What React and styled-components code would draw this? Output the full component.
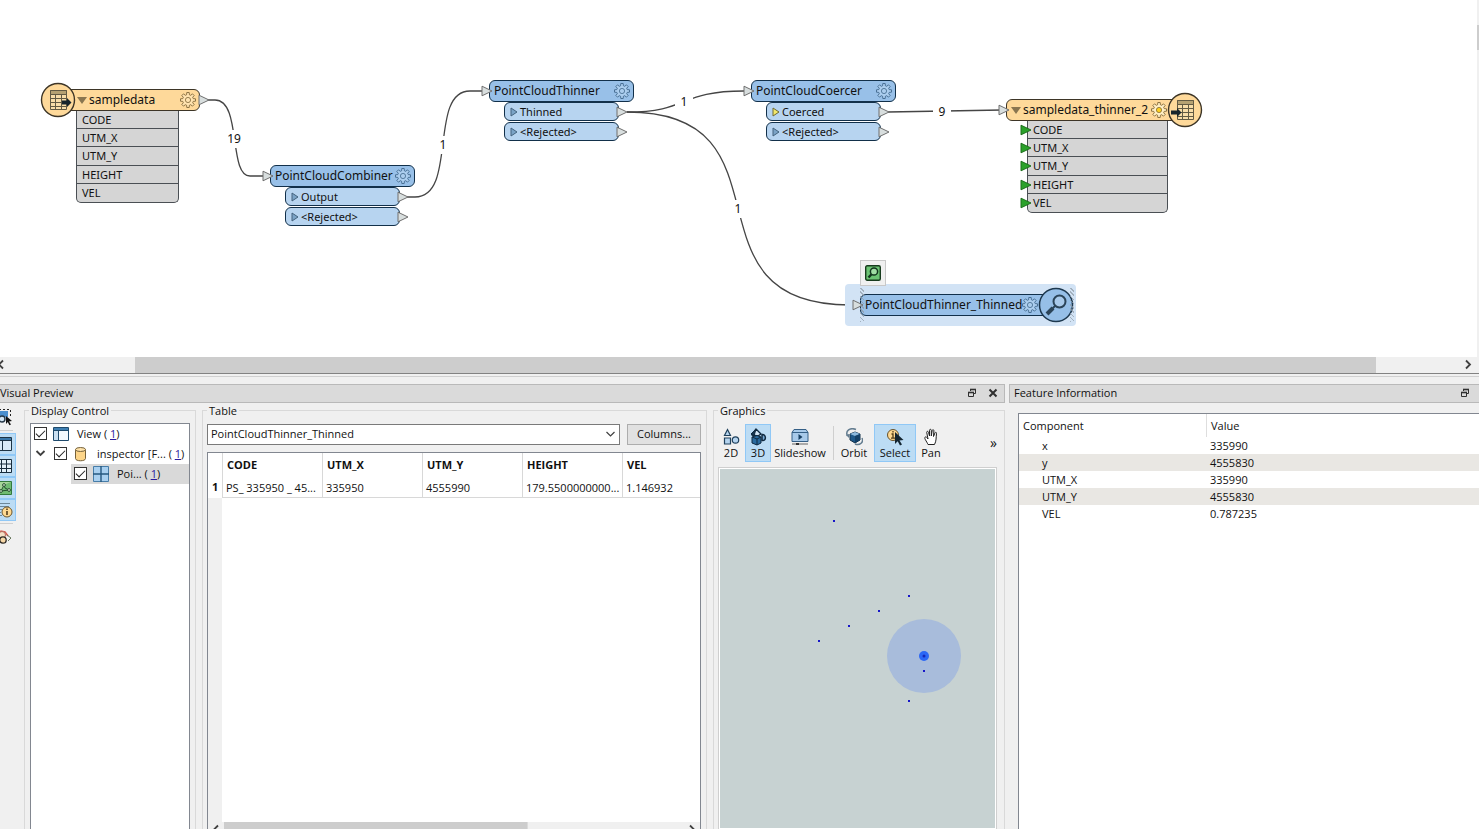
import React, { useState } from "react";
import styled, { createGlobalStyle } from "styled-components";

const edges = [
  "M207 100 H215 C242 100 228 176 250 176 H264",
  "M407 197 H415 C458 197 428 91 470 91 H484",
  "M627 112 C690 112 678 91 744 91",
  "M627 112 C800 112 676 305 850 305 H854",
  "M888 112 L1002 110",
];

const edgeLabels = [
  { x: 234, y: 139, text: "19" },
  { x: 443, y: 145, text: "1" },
  { x: 684, y: 102, text: "1" },
  { x: 942, y: 112, text: "9" },
  { x: 738, y: 209, text: "1" },
];

const transformers = [
  { x: 270, y: 165, name: "PointCloudCombiner", port: "Output" },
  { x: 489, y: 80, name: "PointCloudThinner", port: "Thinned" },
  { x: 751, y: 80, name: "PointCloudCoercer", port: "Coerced", hot: true },
];

const attributes = ["CODE", "UTM_X", "UTM_Y", "HEIGHT", "VEL"];

const features = [
  ["x", "335990"],
  ["y", "4555830"],
  ["UTM_X", "335990"],
  ["UTM_Y", "4555830"],
  ["VEL", "0.787235"],
];

const points = [
  [115, 53],
  [190, 128],
  [160, 143],
  [130, 158],
  [100, 173],
  [205, 203],
  [190, 233],
];

// eight teeth, four corners each, around (9, 9)
const gearPoints = Array.from({ length: 8 }, (_, i) =>
  [
    [-15, 5.4],
    [-9, 7.6],
    [9, 7.6],
    [15, 5.4],
  ].map(([offset, r]) => {
    const a = ((i * 45 + offset) * Math.PI) / 180;
    return `${(9 + r * Math.cos(a)).toFixed(2)},${(9 + r * Math.sin(a)).toFixed(2)}`;
  })
)
  .flat()
  .join(" ");

function Port({ color = "#d8dede", line = "#6f6f6f" }) {
  return (
    <svg width="12" height="12" viewBox="0 0 12 12">
      <path d="M1 1.2 L11 6 L1 10.8 Z" fill={color} stroke={line} />
    </svg>
  );
}

function Expander({ hot }) {
  return (
    <svg width="8" height="10" viewBox="0 0 8 10">
      <path
        d="M1 1 L7 5 L1 9 Z"
        fill={hot ? "#f2e86a" : "#7ba3c6"}
        stroke={hot ? "#6e6a34" : "#44637e"}
      />
    </svg>
  );
}

function Gear({ stroke = "#41688c", fill = "#abcdee", core = "none" }) {
  return (
    <svg width="16" height="16" viewBox="1 1 16 16" stroke={stroke}>
      <polygon points={gearPoints} fill={fill} strokeLinejoin="round" strokeWidth=".9" />
      <circle cx="9" cy="9" r="2.6" fill={core} strokeWidth=".8" />
    </svg>
  );
}

function Sheet({ writer }) {
  return (
    <svg width="36" height="36" viewBox="0 0 36 36">
      <circle cx="18" cy="18" r="16.5" fill="#fed99a" stroke="#3d3527" strokeWidth="1.4" />
      <g stroke="#625a43" fill="#f8dda8">
        <path d="M10.5 8.5h16v19h-16z" />
        <path d="M10.5 8.5h16v4h-16z" fill="#b5a172" />
        <path d="M10.5 16.5h16M10.5 20.5h16M10.5 24.5h16M15.5 12.5v15M21.5 12.5v15" />
      </g>
      <path
        d={
          writer
            ? "M4 18.5h6v-2.5l4.5 4.5-4.5 4.5v-2.5H4z"
            : "M22 18.5h5v-2.5l4.5 4.5-4.5 4.5v-2.5h-5z"
        }
        fill="#17252c"
      />
    </svg>
  );
}

function Glass() {
  return (
    <svg width="36" height="36" viewBox="0 0 36 36">
      <circle cx="18" cy="18" r="16.5" fill="#96bfe8" stroke="#1d384f" strokeWidth="1.5" />
      <circle cx="21.5" cy="14.5" r="6" fill="#a9caeb" stroke="#2b4459" strokeWidth="2" />
      <path d="M17 19 L14.5 21.5" stroke="#2b4459" strokeWidth="2" />
      <path d="M15 21 L9 27" stroke="#2b4459" strokeWidth="4" />
    </svg>
  );
}

function Chevron({ dir = "down", color = "#404040", bold }) {
  const d = {
    down: "M1.5 3 L5.5 7 L9.5 3",
    left: "M7 1.5 L3 5.5 L7 9.5",
    right: "M4 1.5 L8 5.5 L4 9.5",
  }[dir];
  return (
    <svg width="11" height="11" viewBox="0 0 11 11">
      <path d={d} fill="none" stroke={color} strokeWidth={bold ? 1.8 : 1.2} />
    </svg>
  );
}

function FloatIcon() {
  return (
    <svg width="10" height="10" viewBox="0 0 10 10" fill="none" stroke="#303030">
      <path d="M3.5 3V1.5h5v4H7" />
      <path d="M3 1.5h6" strokeWidth="1.6" />
      <path d="M1.5 4.5h5v4h-5z" />
      <path d="M1 4.5h6" strokeWidth="1.6" />
    </svg>
  );
}

function WindowIcon() {
  return (
    <svg width="16" height="16" viewBox="0 0 16 16">
      <path d="M.5 1.5h15v13H.5z" fill="#f4f9fd" stroke="#1f4a6c" />
      <path d="M1 2h14v2.5H1z" fill="#3f7fb2" />
      <path d="M.5 4.5h15M5.5 4.5v10" stroke="#1f4a6c" />
      <path d="M1 5h4v9H1z" fill="#cbe0f1" />
    </svg>
  );
}

function StripIcon({ kind }) {
  return (
    <svg width="18" height="18" viewBox="0 0 18 18">
      {kind === "pick" && (
        <>
          <path d="M0 3h13v6H0z" fill="#4b8fce" />
          <path d="M0 1.5h15.5V10" fill="none" stroke="#222" strokeDasharray="2 2" />
          <circle cx="7" cy="11" r="3" fill="#d2e6f5" stroke="#263746" strokeWidth="1.4" />
          <path d="M11 8l6 5-3 .4 2 3-1.6.8-1.6-3.2L11 16z" fill="#111" />
        </>
      )}
      {kind === "window" && (
        <>
          <path d="M1.5 2.5h15v13h-15z" fill="#d9eaf7" stroke="#1d3344" />
          <path d="M2 3h14v2.5H2z" fill="#3976a8" />
          <path d="M2 5.5h14M7.5 5.5v10" stroke="#1d3344" />
        </>
      )}
      {kind === "grid" && (
        <path
          d="M1.5 2.5h15v13h-15zM1.5 7h15M1.5 11.5h15M6.5 2.5v13M11.5 2.5v13"
          fill="#e4f0f9"
          stroke="#182c3c"
        />
      )}
      {kind === "map" && (
        <>
          <path d="M1.5 2.5h15v13h-15z" fill="#a6d69a" stroke="#337a3d" />
          <path d="M2 13l5-3 4-5 5-2v12H2z" fill="#6fbb72" />
          <path d="M6 12l3-6M6 12l8-1M9 6l1 3 4 2" fill="none" stroke="#234d2d" />
          <circle cx="9" cy="6" r="1.4" fill="#e9f7e4" stroke="#234d2d" />
          <circle cx="14" cy="11" r="1.4" fill="#e9f7e4" stroke="#234d2d" />
          <circle cx="6" cy="12" r="1.4" fill="#e9f7e4" stroke="#234d2d" />
        </>
      )}
      {kind === "info" && (
        <>
          <path d="M0 2.5h15M0 5.5h14M0 8.5h7M0 11.5h6M0 14.5h7" stroke="#6d8798" />
          <circle cx="12" cy="11" r="5" fill="#ffd991" stroke="#6d5529" />
          <path d="M12 10v4M12 7.5v1.4" stroke="#4a3514" strokeWidth="1.5" />
        </>
      )}
      {kind === "bug" && (
        <>
          <path d="M3 6l3-3 4 1 3 4" fill="none" stroke="#d85b50" strokeWidth="1.5" />
          <circle cx="7" cy="7" r="3.5" fill="#f4dfc5" stroke="#b0685a" />
          <circle cx="8" cy="12" r="3.2" fill="#f7d8a7" stroke="#2e2a26" strokeWidth="1.3" />
          <path d="M12 7l4 3-3 3" fill="none" stroke="#66765c" />
        </>
      )}
    </svg>
  );
}

function ToolIcon({ kind }) {
  return (
    <svg width="18" height="18" viewBox="0 0 18 18">
      {kind === "2D" && (
        <g fill="#b5d4ef" stroke="#20415c" strokeWidth="1.2">
          <path d="M5.5 1.5L8.5 7.5h-6z" />
          <path d="M2.5 10h6v6h-6z" />
          <circle cx="13.5" cy="12" r="3.2" />
        </g>
      )}
      {kind === "3D" && (
        <g stroke="#102a40" strokeLinejoin="round">
          <path d="M7 1l5 5-3 2-6-1z" fill="#d2e6f5" strokeWidth="1.4" />
          <path d="M7 1L2 6l3 2z" fill="#17364f" />
          <path d="M3 9l5-1.5 4 1.5v6l-4 2-5-2z" fill="#2b6b9e" />
          <path d="M3 9l5 2 4-2M8 11v6" fill="none" />
          <path d="M13 6.5c4-1 5 7 0 6z" fill="#78aad5" strokeWidth="1.5" />
        </g>
      )}
      {kind === "Slideshow" && (
        <g stroke="#355f86">
          <path d="M3 1.5h12l2 3v9H1v-9z" fill="#a8caea" />
          <path d="M1 4.5h16" />
          <path d="M7.5 6l4 3-4 3z" fill="#163e62" stroke="none" />
          <path d="M1 16h16" stroke="#aaa" strokeWidth="2" />
          <path d="M5 16h3" stroke="#333" strokeWidth="2" />
        </g>
      )}
      {kind === "Orbit" && (
        <g>
          <path d="M5 6l5-2 5 2v6l-5 3-5-3z" fill="#1e5788" stroke="#14324b" />
          <path d="M5 6l5-2 5 2-5 2z" fill="#8cb8dd" />
          <path d="M10 8v7l5-3V6z" fill="#133f66" />
          <path d="M11 1.5C5-1 0 3 2.5 8M17 10c2 4-2 8-7 6" fill="none" stroke="#647d90" strokeWidth="1.5" />
          <path d="M1 7l3 3 0-4z" fill="#647d90" />
        </g>
      )}
      {kind === "Select" && (
        <g>
          <circle cx="7" cy="7" r="5.5" fill="#ffd991" stroke="#68512a" />
          <path d="M5.5 6H7v4M5 10.2h4M7 3v1.5" fill="none" stroke="#533d18" strokeWidth="1.3" />
          <path d="M9 4l8.5 8-4 .5 2.5 4-2 1-2.3-4.2L9 16z" fill="#132531" />
        </g>
      )}
      {kind === "Pan" && (
        <path
          d="M6 16.5C4.5 13 2 10.5 3 9.2c.8-.9 2 .2 3 1.8L4.7 4.3c0-1.3 1.5-1.3 1.8 0L7.5 8V2.3c0-1.3 1.8-1.3 1.8 0V8l.9-5.5c.2-1.2 1.7-1 1.7.2L11.5 8.5l1.5-3.7c.5-1 1.7-.5 1.5.6-.5 3.8 0 7.6-2 11.1z"
          fill="#fff"
          stroke="#222"
        />
      )}
    </svg>
  );
}

function Transformer({ x, y, name, port, hot }) {
  return (
    <Node $x={x} $y={y}>
      <Header $w={145} $blue>
        <NodeName>{name}</NodeName>
        <IconButton aria-label={`${name} properties`}>
          <Gear />
        </IconButton>
      </Header>
      <InPort $top={5}>
        <Port />
      </InPort>
      <Ports>
        {[port, "<Rejected>"].map((p, i) => (
          <PortRow key={p}>
            <Expander hot={hot && i === 0} />
            {p}
            <OutPort $top={3}>
              <Port />
            </OutPort>
          </PortRow>
        ))}
      </Ports>
    </Node>
  );
}

function Workspace() {
  return (
    <Canvas>
      <Links width="1479" height="357">
        {edges.map((d) => (
          <path key={d} d={d} fill="none" stroke="#454545" strokeWidth="1.3" />
        ))}
      </Links>
      {edgeLabels.map((l) => (
        <EdgeLabel key={`${l.x}-${l.y}`} $x={l.x} $y={l.y}>
          {l.text}
        </EdgeLabel>
      ))}

      <Node $x={58} $y={89}>
        <Header $w={142} $pad={18}>
          <Triangle />
          <NodeName>sampledata</NodeName>
          <IconButton aria-label="sampledata properties">
            <Gear stroke="#80683a" fill="#ffe3b0" />
          </IconButton>
        </Header>
        <OutPort $top={5}>
          <Port />
        </OutPort>
        <Badge $x={-18}>
          <Sheet />
        </Badge>
        <Attributes $w={103} $left={18}>
          {attributes.map((a) => (
            <li key={a}>{a}</li>
          ))}
        </Attributes>
      </Node>

      {transformers.map((t) => (
        <Transformer key={t.name} {...t} />
      ))}

      <Node $x={1006} $y={99}>
        <Header $w={180} $pad={4} $end={18}>
          <Triangle />
          <NodeName>sampledata_thinner_2</NodeName>
          <IconButton aria-label="sampledata_thinner_2 properties">
            <Gear stroke="#80683a" fill="#ffefc4" core="#ffd21e" />
          </IconButton>
        </Header>
        <InPort $top={5}>
          <Port />
        </InPort>
        <Badge $x={161}>
          <Sheet writer />
        </Badge>
        <Attributes $w={141} $left={21}>
          {attributes.map((a) => (
            <li key={a}>
              <InPort $top={3}>
                <Port color="#2ba12b" line="#1d701d" />
              </InPort>
              {a}
            </li>
          ))}
        </Attributes>
      </Node>

      <Selection />
      <Node $x={860} $y={294}>
        <Header $w={196} $blue $end={18}>
          <NodeName>PointCloudThinner_Thinned</NodeName>
          <IconButton aria-label="PointCloudThinner_Thinned properties">
            <Gear />
          </IconButton>
        </Header>
        <InPort $top={5}>
          <Port />
        </InPort>
        <Hatch $x={0} />
        <Badge $x={178}>
          <Glass />
        </Badge>
        <Hatch $x={210} />
        <Popup aria-label="Inspect">
          <svg width="16" height="16" viewBox="0 0 16 16">
            <rect x=".7" y=".7" width="14.6" height="14.6" rx="1.5" fill="#6cc474" stroke="#173b1d" strokeWidth="1.4" />
            <circle cx="9" cy="6.5" r="3.6" fill="#a0dda4" stroke="#12351d" strokeWidth="1.5" />
            <path d="M6.5 9.2L3.5 12.5" stroke="#12351d" strokeWidth="2.4" />
          </svg>
        </Popup>
      </Node>
      <EdgeBar />
    </Canvas>
  );
}

function TreeItem({ indent, icon, label, open, selected }) {
  const [checked, setChecked] = useState(true);

  return (
    <TreeRow $indent={indent}>
      {open && <Chevron bold />}
      <TreeLabel $selected={selected}>
        <Check type="checkbox" checked={checked} onChange={() => setChecked(!checked)} />
        {icon}
        <span>
          {label} ( <a href="#count">1</a>)
        </span>
      </TreeLabel>
    </TreeRow>
  );
}

function DisplayControl() {
  return (
    <Group $w={172}>
      <legend>Display Control</legend>
      <Tree>
        <TreeItem indent={3} icon={<WindowIcon />} label="View" />
        <TreeItem
          indent={4}
          open
          label="inspector [F..."
          icon={
            <svg width="16" height="16" viewBox="0 0 16 16" fill="#fdd589" stroke="#75613a">
              <path d="M2.5 3.5v9c0 3 10 3 10 0v-9" />
              <ellipse cx="7.5" cy="3.5" rx="5" ry="2" fill="#fee2aa" />
            </svg>
          }
        />
        <TreeItem
          indent={40}
          selected
          label="Poi..."
          icon={
            <svg width="16" height="16" viewBox="0 0 16 16">
              <path d="M.5 .5h15v15H.5z" fill="#a9d0f0" stroke="#477da8" />
              <path d="M8 0v16M0 8h16" stroke="#26587f" strokeWidth="1.4" />
            </svg>
          }
        />
      </Tree>
    </Group>
  );
}

function TablePanel() {
  return (
    <Group $grow>
      <legend>Table</legend>
      <TableTools>
        <Picker>
          <select aria-label="Feature type">
            <option>PointCloudThinner_Thinned</option>
          </select>
          <Chevron />
        </Picker>
        <ColumnsButton>Columns...</ColumnsButton>
      </TableTools>
      <TableBox>
        <TableArea>
          <DataTable>
            <thead>
              <tr>
                <th />
                {attributes.map((a) => (
                  <th key={a}>{a}</th>
                ))}
              </tr>
            </thead>
            <tbody>
              <tr>
                <th>1</th>
                <td>PS_ 335950 _ 45...</td>
                <td>335950</td>
                <td>4555990</td>
                <td>179.5500000000...</td>
                <td>1.146932</td>
              </tr>
            </tbody>
          </DataTable>
        </TableArea>
        <TableScroll>
          <Chevron dir="left" bold />
          <ScrollThumb $start={0} $size={66} />
          <Chevron dir="right" bold />
        </TableScroll>
      </TableBox>
    </Group>
  );
}

function Graphics() {
  const [mode, setMode] = useState("3D");
  const [tool, setTool] = useState("Select");

  return (
    <Group $w={292}>
      <legend>Graphics</legend>
      <Toolbar>
        {["2D", "3D"].map((m) => (
          <ToolButton key={m} $w={26} $on={mode === m} onClick={() => setMode(m)}>
            <ToolIcon kind={m} />
            {m}
          </ToolButton>
        ))}
        <ToolButton $w={56}>
          <ToolIcon kind="Slideshow" />
          Slideshow
        </ToolButton>
        <Divider />
        {["Orbit", "Select", "Pan"].map((t) => (
          <ToolButton
            key={t}
            $w={{ Orbit: 38, Select: 42, Pan: 28 }[t]}
            $on={tool === t}
            onClick={() => setTool(t)}
          >
            <ToolIcon kind={t} />
            {t}
          </ToolButton>
        ))}
        <MoreButton aria-label="More tools">»</MoreButton>
      </Toolbar>
      <Viewport>
        <svg width="276" height="361">
          <circle cx="205" cy="188" r="37" fill="#a8bcdb" />
          <circle cx="205" cy="188" r="5" fill="#2b67f5" />
          <circle cx="205" cy="188" r="1.5" fill="#1428b8" />
          {points.map(([x, y]) => (
            <rect key={`${x}-${y}`} x={x - 1} y={y - 1} width="2" height="2" fill="#1717c8" />
          ))}
        </svg>
      </Viewport>
    </Group>
  );
}

function App() {
  return (
    <Page>
      <GlobalStyle />
      <Workspace />
      <CanvasScroll>
        <Chevron dir="left" bold />
        <ScrollThumb $start={8} $size={87} />
        <Chevron dir="right" bold />
      </CanvasScroll>
      <Docks>
        <Dock $grow={1005}>
          <TitleBar $clip>
            <h2>Visual Preview</h2>
            <IconButton aria-label="Float">
              <FloatIcon />
            </IconButton>
            <IconButton aria-label="Close">
              <svg width="10" height="10" viewBox="0 0 10 10">
                <path d="M1.5 1.5l7 7M8.5 1.5l-7 7" stroke="#303030" strokeWidth="2" />
              </svg>
            </IconButton>
          </TitleBar>
          <PreviewBody>
            <Strip>
              <StripButton aria-label="Select region">
                <StripIcon kind="pick" />
              </StripButton>
              <StripRule />
              {["window", "grid", "map", "info"].map((k) => (
                <StripButton key={k} $on aria-label={`Toggle ${k}`}>
                  <StripIcon kind={k} />
                </StripButton>
              ))}
              <StripRule />
              <StripButton aria-label="Inspect settings">
                <StripIcon kind="bug" />
              </StripButton>
            </Strip>
            <DisplayControl />
            <TablePanel />
            <Graphics />
          </PreviewBody>
        </Dock>
        <Dock $grow={470}>
          <TitleBar>
            <h2>Feature Information</h2>
            <IconButton aria-label="Float">
              <FloatIcon />
            </IconButton>
          </TitleBar>
          <InfoBox>
            <InfoTable>
              <thead>
                <tr>
                  <th>Component</th>
                  <th>Value</th>
                </tr>
              </thead>
              <tbody>
                {features.map(([name, value]) => (
                  <tr key={name}>
                    <td>{name}</td>
                    <td>{value}</td>
                  </tr>
                ))}
              </tbody>
            </InfoTable>
          </InfoBox>
        </Dock>
      </Docks>
    </Page>
  );
}

export default App;

const GlobalStyle = createGlobalStyle`
  * {
    box-sizing: border-box;
  }

  body {
    margin: 0;
    background: #f0f0f0;
    color: #111;
    font-family: "Open Sans", "Noto Sans", sans-serif;
    font-size: 11px;
    line-height: 16px;
  }

  button,
  select {
    font: inherit;
    color: inherit;
  }

  svg {
    display: block;
    flex: none;
  }
`;

const Page = styled.main`
  display: flex;
  flex-direction: column;
  height: 100vh;
  overflow: hidden;
`;

const Canvas = styled.section`
  position: relative;
  flex: 357 0 0;
  overflow: hidden;
  background: #fff;
  font-family: "Noto Sans", "Open Sans", sans-serif;
`;

const Links = styled.svg`
  position: absolute;
  top: 0;
  left: 0;
`;

const EdgeLabel = styled.span`
  position: absolute;
  left: ${(p) => p.$x}px;
  top: ${(p) => p.$y}px;
  min-width: 18px;
  padding: 0 2px;
  transform: translate(-50%, -50%);
  background: #fff;
  font-size: 12px;
  line-height: 18px;
  text-align: center;
`;

const Node = styled.div`
  position: absolute;
  left: ${(p) => p.$x}px;
  top: ${(p) => p.$y}px;
`;

const Header = styled.div`
  display: flex;
  align-items: center;
  width: ${(p) => p.$w}px;
  height: 22px;
  padding: 0 ${(p) => p.$end || 3}px 0 ${(p) => p.$pad || 4}px;
  border: 1px solid ${(p) => (p.$blue ? "#12304a" : "#3d3527")};
  border-radius: 6px;
  background: ${(p) => (p.$blue ? "#98c0e8" : "#fed99a")};
`;

const NodeName = styled.span`
  flex: 1;
  font-size: 12px;
  white-space: nowrap;
`;

const Triangle = styled.span`
  margin-right: 2px;
  border: 5px solid transparent;
  border-top: 7px solid #8a7650;
  border-bottom: 0;
`;

const IconButton = styled.button`
  display: flex;
  padding: 0;
  border: 0;
  background: none;
`;

const InPort = styled.span`
  position: absolute;
  left: -8px;
  top: ${(p) => p.$top}px;
`;

const OutPort = styled.span`
  position: absolute;
  right: -10px;
  top: ${(p) => p.$top}px;
`;

const Badge = styled.span`
  position: absolute;
  left: ${(p) => p.$x}px;
  top: -7px;
`;

const Ports = styled.div`
  display: grid;
  gap: 1px;
  width: 115px;
  margin-left: 15px;
`;

const PortRow = styled.div`
  position: relative;
  display: flex;
  align-items: center;
  gap: 2px;
  height: 19px;
  padding-left: 5px;
  border: 1px solid #12304a;
  border-radius: 6px;
  background: #b7d4f0;
`;

const Attributes = styled.ul`
  display: grid;
  grid-auto-rows: 1fr;
  width: ${(p) => p.$w}px;
  height: 92px;
  margin: 0 0 0 ${(p) => p.$left}px;
  padding: 0;
  border: 1px solid #4a4f54;
  border-top: 0;
  border-radius: 0 0 5px 5px;
  background: #d5d5d5;
  line-height: 17px;
  list-style: none;

  li {
    position: relative;
    padding-left: 5px;
    border-bottom: 1px solid #4a4f54;
  }

  li:last-child {
    border-bottom: 0;
  }
`;

const Selection = styled.div`
  position: absolute;
  left: 845px;
  top: 284px;
  width: 231px;
  height: 42px;
  border-radius: 4px;
  background: #d2e3f5;
`;

const Hatch = styled.span`
  position: absolute;
  left: ${(p) => p.$x}px;
  top: -6px;
  width: 4px;
  height: 34px;
  background: repeating-linear-gradient(45deg, #8f9ba6 0 1px, transparent 1px 3px);
  opacity: 0.7;
`;

const Popup = styled.button`
  position: absolute;
  left: 0;
  top: -34px;
  display: flex;
  padding: 4px;
  border: 1px solid #c8c8c8;
  background: #f0f0f0;
`;

const EdgeBar = styled.div`
  position: absolute;
  top: 0;
  right: 0;
  width: 2px;
  height: 100%;
  background: linear-gradient(#f0f0f0 25px, #cdcdcd 25px 50px, #f0f0f0 50px);
`;

const CanvasScroll = styled.div`
  display: flex;
  align-items: center;
  gap: 14px;
  height: 17px;
  padding-right: 6px;
  border-bottom: 1px solid #828282;
  background: #f0f0f0;

  > :first-child {
    margin-left: -4px;
  }
`;

const ScrollThumb = styled.div`
  flex: 1;
  align-self: stretch;
  background: linear-gradient(#cdcdcd, #cdcdcd) no-repeat;
  background-size: ${(p) => p.$size}% 100%;
  background-position: ${(p) => (p.$start * 100) / (100 - p.$size)}% 0;
`;

const Docks = styled.div`
  display: flex;
  gap: 4px;
  flex: 446 0 0;
  min-height: 0;
  margin-top: 2px;
  padding-top: 7px;
  border-top: 1px solid #d0d0d0;
`;

const Dock = styled.section`
  display: flex;
  flex-direction: column;
  flex: ${(p) => p.$grow} 0 0;
  min-width: 0;
`;

const TitleBar = styled.header`
  display: flex;
  align-items: center;
  gap: 11px;
  height: 19px;
  padding: 0 ${(p) => (p.$clip ? "6px 0 0" : "9px 0 4px")};
  border: 1px solid #b9b9b9;
  border-left-width: ${(p) => (p.$clip ? 0 : 1)}px;
  border-right-width: ${(p) => (p.$clip ? 1 : 0)}px;
  background: #dadada;

  h2 {
    flex: 1;
    margin: 0;
    font-size: 11px;
    font-weight: 400;
  }
`;

const PreviewBody = styled.div`
  display: flex;
  gap: 6px;
  flex: 1;
  min-height: 0;
`;

const Strip = styled.div`
  display: flex;
  flex-direction: column;
  width: 18px;
  padding-top: 3px;
`;

const StripButton = styled.button`
  display: flex;
  justify-content: flex-end;
  align-items: center;
  width: 16px;
  height: 22px;
  padding: 0 2px 0 0;
  border: 1px solid ${(p) => (p.$on ? "#90c8f6" : "transparent")};
  border-left: 0;
  background: ${(p) => (p.$on ? "#bcdcf4" : "none")};
`;

const StripRule = styled.div`
  width: 13px;
  height: 1px;
  margin: 2px 0;
  background: #cfcfcf;
`;

const Group = styled.fieldset`
  display: flex;
  flex-direction: column;
  flex: ${(p) => (p.$grow ? "1 1 0" : `0 0 ${p.$w}px`)};
  min-width: 0;
  margin: 0;
  padding: 4px 5px 0 4px;
  border: 1px solid #d9d9d9;
  border-bottom: 0;

  legend {
    padding: 0 2px;
  }
`;

const Tree = styled.div`
  flex: 1;
  margin-left: 1px;
  border: 1px solid #828790;
  border-bottom: 0;
  background: #fff;
  overflow: hidden;
`;

const TreeRow = styled.div`
  display: flex;
  align-items: center;
  gap: 8px;
  height: 20px;
  padding-left: ${(p) => p.$indent}px;
`;

const TreeLabel = styled.label`
  display: flex;
  align-items: center;
  gap: 6px;
  flex: 1;
  height: 20px;
  padding-left: ${(p) => (p.$selected ? 3 : 0)}px;
  background: ${(p) => (p.$selected ? "#d9d9d9" : "none")};
  white-space: nowrap;

  span {
    padding-left: 2px;
  }

  a {
    color: #2a1a9c;
  }
`;

const Check = styled.input`
  appearance: none;
  flex: none;
  width: 13px;
  height: 13px;
  margin: 0;
  border: 1px solid #333;
  background: #fff;

  &:checked::before {
    content: "";
    display: block;
    width: 8px;
    height: 4px;
    margin: 2px 1px;
    border: solid #222;
    border-width: 0 0 1px 1px;
    transform: rotate(-45deg);
  }
`;

const TableTools = styled.div`
  display: flex;
  gap: 7px;
  height: 21px;
  margin-top: 1px;
`;

const Picker = styled.div`
  display: flex;
  align-items: center;
  flex: 1;
  padding-right: 3px;
  border: 1px solid #7a7a7a;
  background: #fff;

  select {
    flex: 1;
    padding: 0 3px;
    border: 0;
    background: none;
    appearance: none;
  }
`;

const ColumnsButton = styled.button`
  width: 74px;
  padding: 0;
  border: 1px solid #adadad;
  background: #e1e1e1;
`;

const TableBox = styled.div`
  display: flex;
  flex-direction: column;
  flex: 1;
  margin-top: 7px;
  border: 1px solid #828790;
  border-bottom: 0;
  background: #fff;
`;

const TableArea = styled.div`
  flex: 1;
  background: linear-gradient(90deg, #f0f0f0 14px, #fff 14px);
`;

const DataTable = styled.table`
  width: 100%;
  table-layout: fixed;
  border-spacing: 0;
  background: #fff;

  th,
  td {
    width: 100px;
    height: 21px;
    padding: 0 3px;
    border-right: 1px solid #d8d8d8;
    text-align: left;
    white-space: nowrap;
    overflow: hidden;
  }

  thead th {
    height: 24px;
    padding-left: 4px;
  }

  tbody td {
    border-bottom: 1px solid #d8d8d8;
  }

  tr > :first-child {
    width: 15px;
    padding: 0 4px;
  }

  tr > :last-child {
    width: auto;
    border-right: 0;
  }

  tbody tr > * {
    padding-top: 2px;
  }
`;

const TableScroll = styled.div`
  display: flex;
  gap: 2px;
  height: 7px;
  padding: 0 3px;
  overflow: hidden;
  background: #f0f0f0;

  svg {
    margin-top: 2px;
  }
`;

const Toolbar = styled.div`
  display: flex;
  align-items: center;
  gap: 1px;
  height: 38px;
  margin-top: 1px;
`;

const ToolButton = styled.button`
  display: flex;
  flex-direction: column;
  align-items: center;
  width: ${(p) => p.$w}px;
  height: 38px;
  padding: 3px 0 0;
  border: 1px solid ${(p) => (p.$on ? "#90c8f6" : "transparent")};
  background: ${(p) => (p.$on ? "#bcdcf4" : "none")};
  line-height: 14px;
`;

const Divider = styled.div`
  width: 1px;
  height: 34px;
  margin-left: 4px;
  background: #cfcfcf;
`;

const MoreButton = styled.button`
  margin-left: auto;
  padding: 0 2px;
  border: 0;
  background: none;
  font-size: 14px;
`;

const Viewport = styled.div`
  flex: 1;
  min-height: 0;
  margin: 5px 2px 0 0;
  border: 1px solid #cfcfcf;
  border-bottom: 0;
  background: #c7d2d2;
  box-shadow: inset 0 0 0 1px #fff;
  overflow: hidden;
`;

const InfoBox = styled.div`
  flex: 1;
  margin: 10px 0 0 9px;
  border: 1px solid #828790;
  border-width: 1px 0 0 1px;
  background: #fff;
`;

const InfoTable = styled.table`
  width: 100%;
  table-layout: fixed;
  border-spacing: 0;
  line-height: 17px;

  th {
    height: 23px;
    padding: 0 4px;
    font-weight: 400;
    text-align: left;
  }

  th:first-child {
    width: 188px;
    border-right: 1px solid #dedede;
  }

  td {
    height: 17px;
    padding: 0 3px;
  }

  td:first-child {
    padding-left: 23px;
  }

  tbody tr:nth-child(even) {
    background: #e9e7e3;
  }
`;
